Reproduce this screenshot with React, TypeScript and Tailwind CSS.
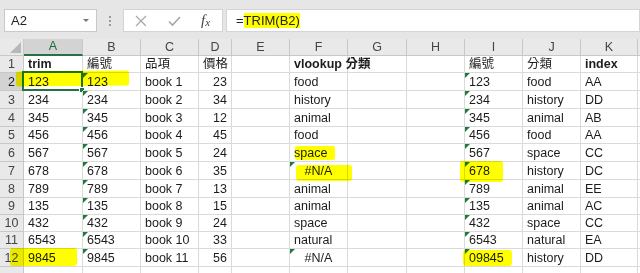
import React from "react";

type Align = "l" | "r" | "c";
type CellDef = { t?: string; a?: Align; b?: boolean; tri?: boolean };

const widths = [
  "w-[59px]",
  "w-[58px]",
  "w-[58px]",
  "w-[33px]",
  "w-[58px]",
  "w-[58px]",
  "w-[59px]",
  "w-[58px]",
  "w-[58px]",
  "w-[58px]",
  "w-[57px]",
];
const letters = ["A", "B", "C", "D", "E", "F", "G", "H", "I", "J", "K"];

const rowHeights = [
  "h-[17px]",
  "h-[18px]",
  "h-[18px]",
  "h-[18px]",
  "h-[17px]",
  "h-[18px]",
  "h-[18px]",
  "h-[18px]",
  "h-[17px]",
  "h-[17px]",
  "h-[17px]",
  "h-[18px]",
];

const raw: [string, string, string, string, string, string, string, string][] = [
  ["123", "book 1", "23", "food", "123", "food", "AA", ""],
  ["234", "book 2", "34", "history", "234", "history", "DD", ""],
  ["345", "book 3", "12", "animal", "345", "animal", "AB", ""],
  ["456", "book 4", "45", "food", "456", "food", "AA", ""],
  ["567", "book 5", "24", "space", "567", "space", "CC", ""],
  ["678", "book 6", "35", "#N/A", "678", "history", "DC", ""],
  ["789", "book 7", "13", "animal", "789", "animal", "EE", ""],
  ["135", "book 8", "15", "animal", "135", "animal", "AC", ""],
  ["432", "book 9", "24", "space", "432", "space", "CC", ""],
  ["6543", "book 10", "33", "natural", "6543", "natural", "EA", ""],
  ["9845", "book 11", "56", "#N/A", "09845", "history", "DD", ""],
];

const rows: CellDef[][] = [
  [
    { t: "trim", b: true },
    { t: "編號" },
    { t: "品項" },
    { t: "價格" },
    {},
    { t: "vlookup 分類", b: true },
    {},
    {},
    { t: "編號" },
    { t: "分類" },
    { t: "index", b: true },
  ],
  ...raw.map((r) => {
    const [id, book, price, cat, iid, icat, idx] = r;
    const na = cat === "#N/A";
    return [
      { t: id },
      { t: id, tri: true },
      { t: book },
      { t: price, a: "r" as Align },
      {},
      { t: cat, a: (na ? "c" : "l") as Align, tri: na },
      {},
      {},
      { t: iid, tri: true },
      { t: icat },
      { t: idx },
    ];
  }),
];

const font = "font-['Liberation_Sans','Noto_Sans_CJK_TC',sans-serif]";

function Triangle() {
  return (
    <div className="absolute left-0 top-0 w-0 h-0 border-t-[5px] border-t-[#1f7a3f] border-r-[5px] border-r-transparent" />
  );
}

function Cell({ def, w, sel }: { def: CellDef; w: string; sel?: boolean }) {
  const just =
    def.a === "r" ? "justify-end" : def.a === "c" ? "justify-center" : "justify-start";
  return (
    <div
      className={`relative shrink-0 ${w} h-full border-r border-b border-[#dadada] flex items-end ${just} px-[4px] leading-[15px] whitespace-nowrap text-[12.5px] text-[#1c1c1c] ${
        def.b ? "font-bold" : ""
      }`}
    >
      {def.tri && <Triangle />}
      {def.t && <span>{def.t}</span>}
      {sel && (
        <>
          <div className="absolute -left-[2px] -top-[2px] -right-[1px] -bottom-[1px] border-2 border-[#217346] pointer-events-none" />
          <div className="absolute -right-[3px] -bottom-[3px] w-[6px] h-[6px] bg-[#217346] border border-white" />
        </>
      )}
    </div>
  );
}

function Row({ idx, defs }: { idx: number; defs: CellDef[] }) {
  const selRow = idx === 2;
  return (
    <div className={`flex ${rowHeights[idx - 1]} shrink-0`}>
      <div
        className={`shrink-0 w-[24px] h-full border-r border-b border-[#c8c8c8] flex items-end justify-center leading-[15px] text-[12.5px] ${
          selRow ? "bg-[#d3d3d3] text-[#1f1f1f]" : "bg-[#e9e9e9] text-[#444]"
        }`}
      >
        {idx}
      </div>
      {defs.map((d, i) => (
        <Cell key={i} def={d} w={widths[i]} sel={selRow && i === 0} />
      ))}
      <div className="flex-1 h-full border-b border-[#dadada]" />
    </div>
  );
}

function Hl({ cls }: { cls: string }) {
  return <div className={`absolute bg-[#ffff00] mix-blend-multiply pointer-events-none ${cls}`} />;
}

export default function App() {
  return (
    <div className={`relative w-[640px] h-[273px] overflow-hidden bg-white ${font}`}>
      {/* formula bar */}
      <div className="h-[39px] bg-[#e6e6e6] flex items-start pt-[9px] pl-[4px]">
        <div className="w-[93px] h-[23px] bg-white border border-[#c9c9c9] flex items-center justify-between pl-[6px] pr-[7px]">
          <span className="text-[13px] text-[#222]">A2</span>
          <div className="w-0 h-0 border-l-[3px] border-r-[3px] border-t-[3px] border-l-transparent border-r-transparent border-t-[#777]" />
        </div>
        <div className="w-[26px] h-[23px] flex flex-col items-center justify-center gap-[2px]">
          <div className="w-[2px] h-[2px] bg-[#9a9a9a]" />
          <div className="w-[2px] h-[2px] bg-[#9a9a9a]" />
          <div className="w-[2px] h-[2px] bg-[#9a9a9a]" />
        </div>
        <div className="w-[100px] h-[23px] bg-white border border-[#d4d4d4] flex items-center pl-[11px]">
          <svg width="12" height="12" viewBox="0 0 12 12" className="shrink-0">
            <path d="M1 1 L11 11 M11 1 L1 11" stroke="#a6a6a6" strokeWidth="1.2" fill="none" />
          </svg>
          <svg width="13" height="12" viewBox="0 0 13 12" className="shrink-0 ml-[21px]">
            <path d="M1 6.5 L4.5 10 L12 2" stroke="#a6a6a6" strokeWidth="1.6" fill="none" />
          </svg>
          <span className="ml-[20px] font-['Liberation_Serif',serif] italic text-[15px] text-[#444] leading-none">
            f<span className="text-[11px] relative top-[1px]">x</span>
          </span>
        </div>
        <div className="ml-[3px] flex-1 h-[23px] bg-white border border-[#d4d4d4] flex items-center pl-[9px]">
          <span className="text-[13px] text-[#222] leading-[11px]">
            =<span className="bg-[#ffff00]">TRIM(B2)</span>
          </span>
        </div>
      </div>

      {/* column headers */}
      <div className="flex h-[17px] bg-[#e9e9e9]">
        <div className="relative shrink-0 w-[24px] h-full border-r border-b border-[#c8c8c8]">
          <div className="absolute right-[2px] bottom-[2px] w-0 h-0 border-b-[11px] border-b-[#b7b7b7] border-l-[11px] border-l-transparent" />
        </div>
        {letters.map((l, i) => (
          <div
            key={l}
            className={`shrink-0 ${widths[i]} h-full flex items-center justify-center text-[12.5px] ${
              i === 0
                ? "bg-[#d3d3d3] text-[#1e6b3d] border-b-2 border-b-[#217346] border-r border-r-[#c8c8c8]"
                : "text-[#444] border-r border-b border-[#c8c8c8]"
            }`}
          >
            {l}
          </div>
        ))}
        <div className="flex-1 h-full border-b border-[#c8c8c8]" />
      </div>

      {/* rows */}
      {rows.map((defs, i) => (
        <Row key={i} idx={i + 1} defs={defs} />
      ))}
      <div className="flex h-[10px]">
        <div className="shrink-0 w-[24px] h-full bg-[#e9e9e9] border-r border-[#c8c8c8]" />
        {widths.map((w, i) => (
          <div key={i} className={`shrink-0 ${w} h-full border-r border-[#dadada]`} />
        ))}
      </div>

      {/* highlighter marks */}
      <Hl cls="left-[16px] top-[71px] w-[113px] h-[15px] rounded-[2px] -rotate-[0.6deg]" />
      <Hl cls="left-[10px] top-[248px] w-[67px] h-[18px] rounded-[3px]" />
      <Hl cls="left-[295px] top-[146px] w-[40px] h-[14px] rounded-[2px]" />
      <Hl cls="left-[296px] top-[165px] w-[56px] h-[16px] rounded-[3px]" />
      <Hl cls="left-[460px] top-[161px] w-[43px] h-[21px] rounded-[3px]" />
      <Hl cls="left-[463px] top-[250px] w-[49px] h-[16px] rounded-[3px]" />
    </div>
  );
}
